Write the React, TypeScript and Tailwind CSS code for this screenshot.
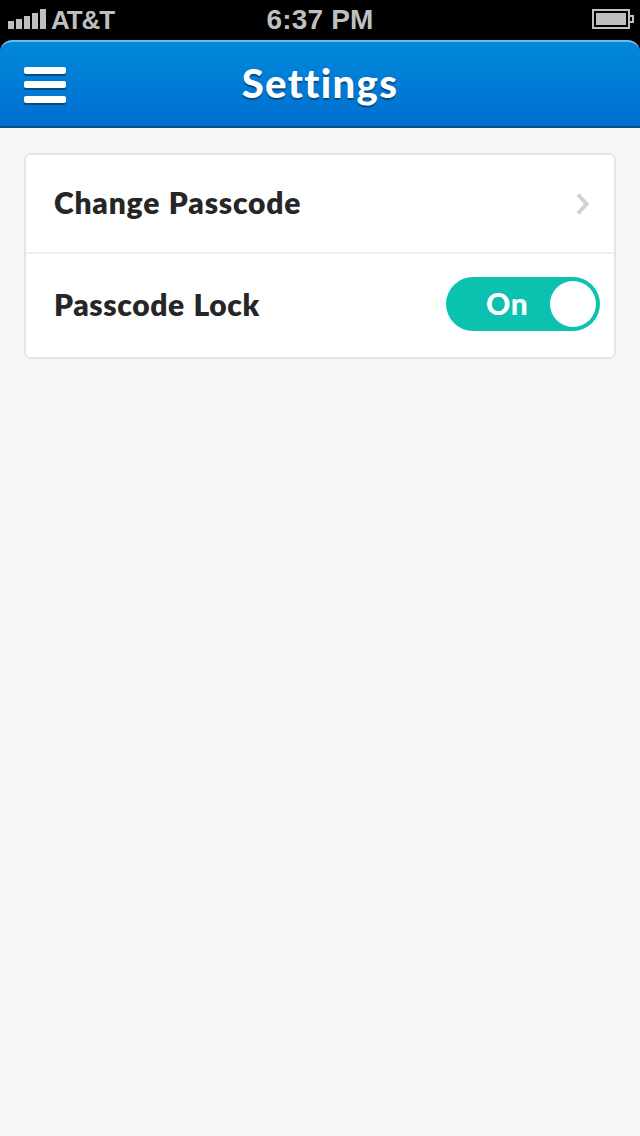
function SignalBars() {
  return (
    <svg width="38" height="20" viewBox="0 0 38 20" fill="#bfbfbf" aria-hidden="true">
      <rect x="0" y="12" width="6" height="8" />
      <rect x="8" y="10" width="6" height="10" />
      <rect x="16" y="7" width="6" height="13" />
      <rect x="24" y="4" width="6" height="16" />
      <rect x="32" y="0" width="6" height="20" />
    </svg>
  );
}

function Battery() {
  return (
    <svg width="42" height="20" viewBox="0 0 42 20" aria-hidden="true">
      <rect x="1" y="1" width="36" height="18" fill="none" stroke="#bfbfbf" strokeWidth="2" />
      <rect x="4" y="4" width="30" height="12" fill="#bfbfbf" />
      <path d="M37 7H41V13H37" fill="none" stroke="#bfbfbf" strokeWidth="2" />
    </svg>
  );
}

function StatusBar() {
  return (
    <div className="grid h-10 grid-cols-3 items-start bg-black font-['Liberation_Sans',sans-serif] font-bold text-[#bfbfbf]">
      <div className="flex pt-[9px] pl-2">
        <SignalBars />
        <span className="ml-[5px] pt-px text-[26px] leading-[20px] tracking-[-1.1px]">AT&amp;T</span>
      </div>
      <span className="pt-[9px] text-center text-[28px] leading-[22px] tracking-[0.2px]">6:37 PM</span>
      <div className="flex justify-end pt-[9px] pr-[6px]">
        <Battery />
      </div>
    </div>
  );
}

function Header() {
  return (
    <div className="bg-black">
      <header className="grid h-22 grid-cols-[66px_1fr_66px] rounded-t-[12px] border-t-2 border-b-2 border-t-[#6dbbe9] border-b-[#07508f] bg-linear-to-b from-[#0088da] to-[#006fd0]">
        <button aria-label="Menu" className="flex flex-col gap-[7px] pt-[25px] pl-6">
          <span className="h-[7px] w-[42px] rounded-[2px] bg-white shadow-[0_2px_0_#064b85]" />
          <span className="h-[7px] w-[42px] rounded-[2px] bg-white shadow-[0_2px_0_#064b85]" />
          <span className="mt-px h-[7px] w-[42px] rounded-[2px] bg-white shadow-[0_2px_0_#064b85]" />
        </button>
        <h1 className="pt-[16px] text-center text-[40px] leading-[50px] font-black tracking-[1.4px] text-white [text-shadow:0_2px_1px_#064b85]">
          Settings
        </h1>
      </header>
    </div>
  );
}

function Toggle() {
  return (
    <button
      role="switch"
      aria-checked="true"
      className="flex h-[54px] w-[154px] items-center justify-between rounded-full bg-[#0bc1b0] pr-1 pl-10 text-[30px] leading-[36px] font-black text-white"
    >
      <span className="pb-[2px] tracking-[0.6px]">On</span>
      <span className="size-[46px] rounded-full bg-white" />
    </button>
  );
}

export default function App() {
  return (
    <div className="flex h-[1136px] w-[640px] flex-col bg-[#f8f7f5] font-['Lato',sans-serif]">
      <StatusBar />
      <Header />
      <main className="px-6 pt-[25px]">
        <div className="rounded-[6px] border-2 border-[#e6e5e4] bg-white text-[30px] leading-[36px] font-extrabold text-[#262626]">
          <div className="flex h-[99px] items-center justify-between border-b-2 border-[#efeeed] pr-6 pl-7">
            <span className="pb-[3px] tracking-[0.8px] [word-spacing:1px]">Change Passcode</span>
            <svg width="14" height="22" viewBox="0 0 14 22" fill="none" stroke="#d3d2ce" strokeWidth="4" aria-hidden="true">
              <path d="M2 1.5L10.5 11L2 20.5" />
            </svg>
          </div>
          <div className="flex h-[103px] items-center justify-between pr-[14px] pb-1 pl-7">
            <span className="tracking-[0.6px] [word-spacing:1px]">Passcode Lock</span>
            <Toggle />
          </div>
        </div>
      </main>
    </div>
  );
}
